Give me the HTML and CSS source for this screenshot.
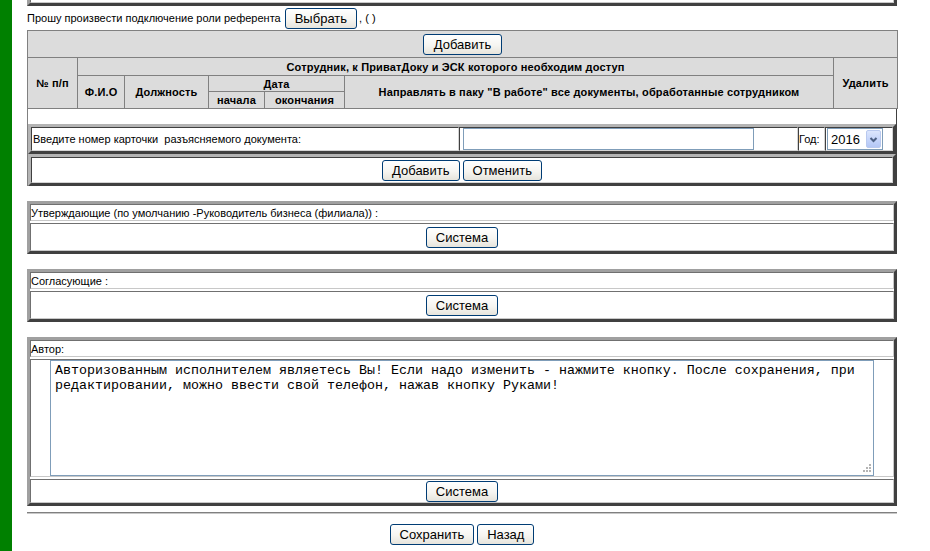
FILE: index.html
```html
<!DOCTYPE html>
<html lang="ru">
<head>
<meta charset="utf-8">
<title>Форма</title>
<link rel="stylesheet" href="styles.css">
</head>
<body>
<div class="layout">
  <div class="sidebar"></div>
  <div class="main">
    <div class="stub"><div class="stub-cell"></div></div>

    <div class="request">
      <span class="req-text">Прошу произвести подключение роли референта</span>
      <button class="btn">Выбрать</button>
      <span class="req-tail">, ( )</span>
    </div>

    <table class="grid">
      <colgroup>
        <col class="w1"><col class="w2"><col class="w3"><col class="w4"><col class="w5"><col class="w6"><col class="w7">
      </colgroup>
      <tr class="r1">
        <td colspan="7"><button class="btn">Добавить</button></td>
      </tr>
      <tr class="r2">
        <th rowspan="3">№ п/п</th>
        <th colspan="5">Сотрудник, к ПриватДоку и ЭСК которого необходим доступ</th>
        <th rowspan="3">Удалить</th>
      </tr>
      <tr class="r3">
        <th rowspan="2">Ф.И.О</th>
        <th rowspan="2">Должность</th>
        <th colspan="2">Дата</th>
        <th rowspan="2">Направлять в паку "В работе" все документы, обработанные сотрудником</th>
      </tr>
      <tr class="r4">
        <th>начала</th>
        <th>окончания</th>
      </tr>
    </table>

    <div class="sec-a">
      <div class="blank"></div>
      <div class="rowbox">
        <div class="cell c-label">Введите номер карточки&nbsp; разъясняемого документа:</div>
        <div class="cell c-input"><input class="text-input" type="text"></div>
        <div class="cell c-year">Год:</div>
        <div class="cell c-select">
          <div class="select">
            <span class="select-val">2016</span>
            <span class="select-arrow">
              <svg width="13" height="15" viewBox="0 0 13 15"><polyline points="3.5,6 6.5,9 9.5,6" fill="none" stroke="#4d6185" stroke-width="2"/></svg>
            </span>
          </div>
        </div>
      </div>
      <div class="rowbox">
        <div class="cell c-buttons">
          <button class="btn">Добавить</button>
          <button class="btn">Отменить</button>
        </div>
      </div>
    </div>

    <div class="panel">
      <div class="pcell phead">Утверждающие (по умолчанию -Руководитель бизнеса (филиала)) :</div>
      <div class="pcell pbody"><button class="btn">Система</button></div>
    </div>

    <div class="panel">
      <div class="pcell phead">Согласующие :</div>
      <div class="pcell pbody"><button class="btn">Система</button></div>
    </div>

    <div class="panel">
      <div class="pcell phead">Автор:</div>
      <div class="pcell ptext">
        <div class="ta-wrap">
          <textarea class="ta">Авторизованным исполнителем являетесь Вы! Если надо изменить - нажмите кнопку. После сохранения, при редактировании, можно ввести свой телефон, нажав кнопку Руками!</textarea>
          <svg class="grip" width="11" height="11" viewBox="0 0 11 11">
            <rect x="8" y="1" width="2" height="2" fill="#b4b4b4"/>
            <rect x="5" y="4" width="2" height="2" fill="#b4b4b4"/>
            <rect x="8" y="4" width="2" height="2" fill="#b4b4b4"/>
            <rect x="2" y="7" width="2" height="2" fill="#b4b4b4"/>
            <rect x="5" y="7" width="2" height="2" fill="#b4b4b4"/>
            <rect x="8" y="7" width="2" height="2" fill="#b4b4b4"/>
          </svg>
        </div>
      </div>
      <div class="pcell pbody pbody-last"><button class="btn">Система</button></div>
    </div>

    <div class="sep"></div>

    <div class="actions">
      <button class="btn">Сохранить</button>
      <button class="btn">Назад</button>
    </div>
  </div>
</div>
</body>
</html>
```
FILE: styles.css
```css
* { box-sizing: border-box; }

html, body {
  margin: 0;
  padding: 0;
  background: #fff;
}

body {
  font-family: "Liberation Sans", Arial, sans-serif;
  font-size: 11px;
  color: #000;
}

.layout {
  display: flex;
  min-height: 551px;
}

.sidebar {
  flex: none;
  width: 12px;
  background: #008000;
}

.main {
  margin-left: 15px;
  width: 870px;
}

/* top partial block */
.stub {
  border: 3px solid;
  border-top: 0;
  border-color: #a0a0a0 #404040 #404040 #a0a0a0;
}
.stub-cell {
  height: 3px;
  border: 1px solid;
  border-top: 0;
  border-color: #707070 #c8c8c8 #c8c8c8 #707070;
}

/* buttons */
.btn {
  font-family: "Liberation Sans", Arial, sans-serif;
  font-size: 13px;
  color: #000;
  height: 21px;
  padding: 0 9px;
  line-height: 19px;
  border: 1px solid #003c74;
  border-radius: 3px;
  background: linear-gradient(180deg, #ffffff 0%, #f6f5f1 55%, #e6e4dc 100%);
  cursor: pointer;
}

/* request line */
.request {
  margin-top: 2px;
  height: 22px;
  display: flex;
  align-items: flex-start;
}
.req-text {
  margin-right: 4px;
  line-height: 21px;
}
.req-tail {
  margin-left: 2px;
  line-height: 21px;
}

/* header grid */
.grid {
  width: 870px;
  border-collapse: collapse;
  table-layout: fixed;
  background: #dcdcdc;
}
.grid td,
.grid th {
  border: 1px solid #808080;
  padding: 0;
  text-align: center;
  vertical-align: middle;
  font-size: 11px;
  font-weight: bold;
  letter-spacing: 0.15px;
}
.w1 { width: 50px; }
.w2 { width: 47px; }
.w3 { width: 84px; }
.w4 { width: 56px; }
.w5 { width: 80px; }
.w6 { width: 489px; }
.w7 { width: 64px; }

.r1 td { height: 27px; }
.r2 th { height: 18px; }
.r3 th { height: 16px; }
.r4 th { height: 17px; }

.r1 .btn { vertical-align: middle; padding: 0 10px; letter-spacing: 0; }

/* section A */
.sec-a {
  border-left: 1px solid #808080;
  border-right: 1px solid #404040;
}
.blank {
  height: 15px;
}
.rowbox {
  display: flex;
  border: 3px solid;
  border-color: #b4b4b4 #404040 #404040 #b4b4b4;
}
.cell {
  display: flex;
  align-items: center;
  border: 1px solid;
  border-color: #404040 #d4d4d4 #d4d4d4 #404040;
}
.rowbox:first-of-type .cell { height: 25px; }
.c-label {
  width: 428px;
  padding-left: 1px;
  white-space: nowrap;
}
.c-input {
  width: 339px;
  padding-left: 3px;
}
.text-input {
  width: 291px;
  height: 22px;
  border: 1px solid #7f9db9;
  padding: 0 2px;
  margin: 0;
  font: 13px "Liberation Sans", Arial, sans-serif;
  background: #fff;
}
.c-year {
  width: 27px;
  padding-left: 0;
}
.c-select {
  flex: 1;
  padding-left: 1px;
}
.select {
  width: 56px;
  height: 22px;
  border: 1px solid #7f9db9;
  display: flex;
  align-items: center;
  padding-left: 3px;
  font-size: 13px;
  background: #fff;
}
.select-arrow {
  margin-left: auto;
  margin-right: 1px;
  width: 15px;
  height: 18px;
  border: 1px solid #b9c9ef;
  border-radius: 2px;
  background: linear-gradient(180deg, #dce6fd 0%, #c3d3fa 60%, #b4c7f5 100%);
  display: flex;
  align-items: center;
  justify-content: center;
}
.c-buttons {
  flex: 1;
  height: 26px;
  justify-content: center;
  gap: 3px;
}

/* panels */
.panel {
  margin-top: 15px;
  border: 3px solid;
  border-color: #a0a0a0 #404040 #404040 #a0a0a0;
  background: #fff;
}
.pcell {
  border: 1px solid;
  border-color: #707070 #c8c8c8 #c8c8c8 #707070;
}
.pcell + .pcell {
  margin-top: 2px;
}
.phead {
  height: 17px;
  line-height: 16px;
  padding-left: 0;
  white-space: nowrap;
}
.pbody {
  height: 28px;
  display: flex;
  justify-content: center;
  align-items: flex-start;
  padding-top: 3px;
}
.pbody-last {
  height: 24px;
  padding-top: 1px;
}
.ptext {
  height: 118px;
  display: flex;
  justify-content: center;
  align-items: flex-start;
}

.ta-wrap {
  position: relative;
  width: 824px;
  height: 116px;
}
.ta {
  display: block;
  width: 824px;
  height: 116px;
  margin: 0;
  border: 1px solid #7f9db9;
  padding: 2px 4px;
  font-family: "Liberation Mono", "Courier New", monospace;
  font-size: 13.333px;
  line-height: 15px;
  color: #000;
  resize: none;
  overflow: hidden;
  background: #fff;
}
.grip {
  position: absolute;
  right: 2px;
  bottom: 2px;
}

/* separator and actions */
.sep {
  margin-top: 6px;
  height: 2px;
  border-top: 1px solid #808080;
  border-bottom: 1px solid #c8c8c8;
}
.actions {
  margin-top: 10px;
  display: flex;
  justify-content: center;
  gap: 3px;
}
```
